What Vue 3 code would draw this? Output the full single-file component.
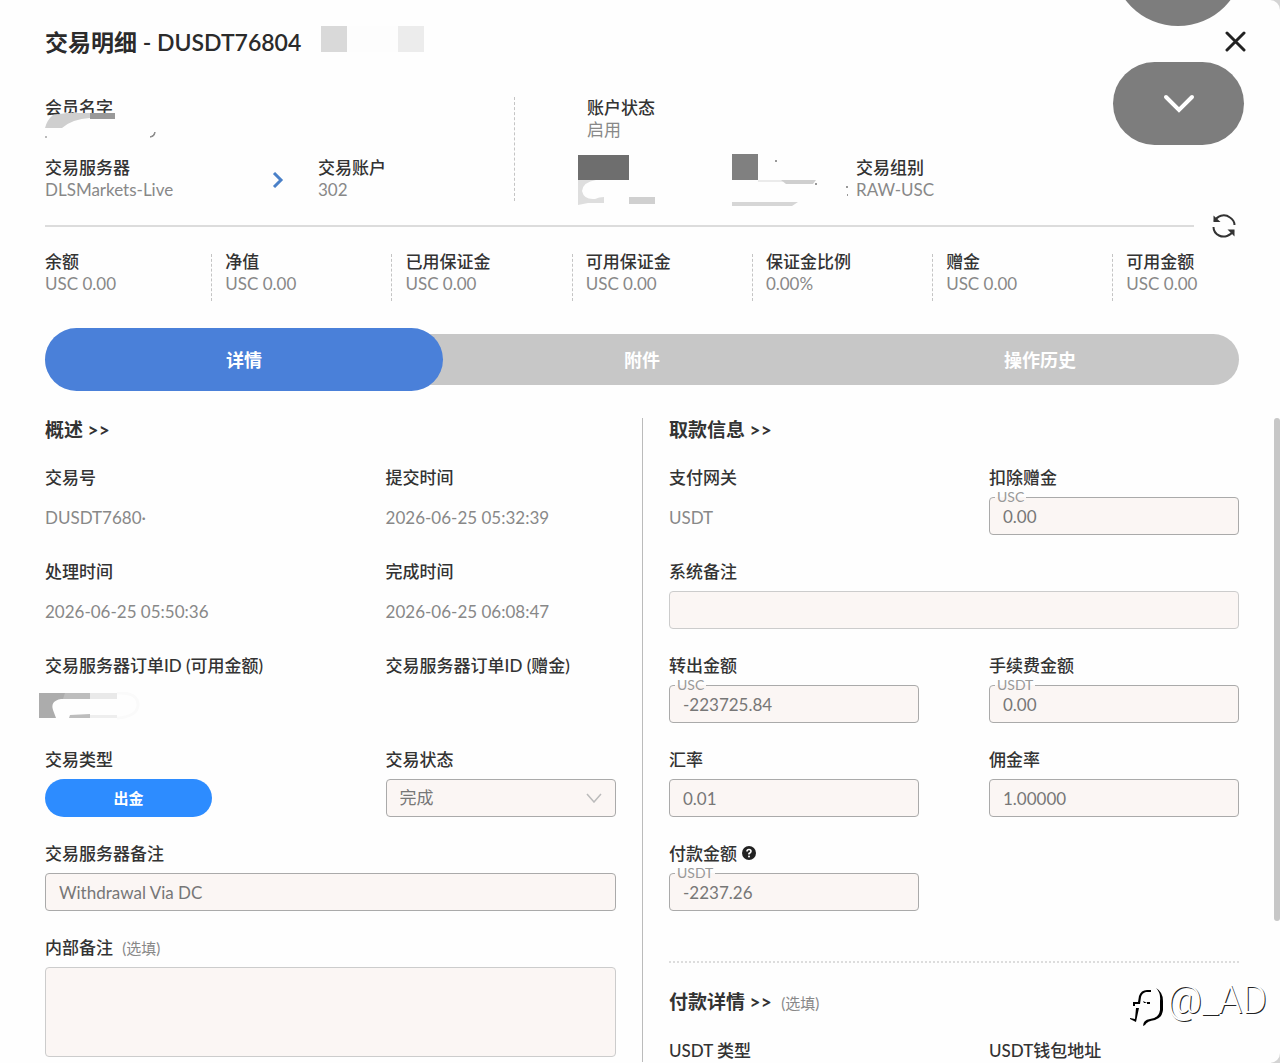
<template>
    <main class="modal">
        <header class="modalHeader">
            <h1>交易明细 - DUSDT76804</h1>
            <svg class="titleMask" width="106" height="26" viewBox="0 0 106 26" aria-hidden="true">
                <rect x="0" y="0" width="26" height="26" fill="#d9d9d9"/>
                <rect x="26" y="0" width="51" height="26" fill="#fdfdfd"/>
                <rect x="77" y="0" width="26" height="26" fill="#ececec"/>
            </svg>
            <button class="iconButton closeButton" type="button" aria-label="关闭">
                <svg width="22" height="22" viewBox="0 0 22 22" fill="none" stroke="#222" stroke-width="3" stroke-linecap="round">
                    <path d="M2 2L19 19M19 2L2 19"/>
                </svg>
            </button>
        </header>

        <section class="account">
            <div class="accountLeft">
                <div class="pair member">
                    <p class="label">会员名字</p>
                    <svg class="nameMask" width="116" height="28" viewBox="0 0 116 28" aria-hidden="true">
                        <path d="M0 15Q2 7 8 2L22 0H45V5Q27 6 17 15Z" fill="#cfcfcf"/>
                        <path d="M45 0H70V6H45Z" fill="#999"/>
                        <path d="M105 24Q109 23 110 19Q110 24 105 24Z" fill="#888" stroke="#888"/>
                        <path d="M0 23H2V25H0Z" fill="#bbb"/>
                    </svg>
                </div>
                <div class="serverRow">
                    <div class="pair server">
                        <p class="label">交易服务器</p>
                        <p class="value">DLSMarkets-Live</p>
                    </div>
                    <svg class="arrow" width="12" height="16" viewBox="0 0 12 16" fill="none" stroke="#4a80c8" stroke-width="3">
                        <path d="M2 1L9 8L2 15"/>
                    </svg>
                    <div class="pair">
                        <p class="label">交易账户</p>
                        <p class="value">302</p>
                    </div>
                </div>
            </div>
            <div class="accountRight">
                <div class="pair member">
                    <p class="label">账户状态</p>
                    <p class="value">启用</p>
                </div>
                <div class="groupRow">
                    <svg class="groupMask" width="278" height="46" viewBox="0 0 278 46" aria-hidden="true">
                        <path d="M0 0H51V25H0Z" fill="#6e6e6e"/>
                        <path d="M0 25H18Q5 27 4 36Q6 45 17 44Q21 42 26 42V48H10L0 50Z" fill="#dedede"/>
                        <path d="M51 42H77V49H51Z" fill="#d0d0d0"/>
                        <path d="M154 -1H180V25H154Z" fill="#808080"/>
                        <path d="M180 25H205V27H180Z" fill="#ebebeb"/>
                        <path d="M203 25H238L235 29H208Z" fill="#cfcfcf"/>
                        <path d="M154 47H220L214 51H154Z" fill="#d6d6d6"/>
                        <path d="M197 5H199V7H197ZM237 28H239V30H237ZM268 31H270V33H268ZM269 39H270V41H269Z" fill="#999"/>
                    </svg>
                    <div class="pair">
                        <p class="label">交易组别</p>
                        <p class="value">RAW-USC</p>
                    </div>
                </div>
            </div>
        </section>

        <div class="refreshRow">
            <div class="line"></div>
            <button class="iconButton" type="button" aria-label="刷新">
                <svg width="24" height="24" viewBox="0 0 24 24" fill="none" stroke="#333" stroke-width="2">
                    <path d="M2.500 7.500C5 2 12 -1 18 3.500C21 5.500 22.500 8.500 22.500 11"/>
                    <path d="M1.500 13C1.500 17 4 20 7 21.500C12 24 18.500 22 21.500 16.500"/>
                    <path d="M1.500 1.500V8H8.500Z" fill="#333" stroke="none"/>
                    <path d="M22.500 22.500V15.500H15.500Z" fill="#333" stroke="none"/>
                </svg>
            </button>
        </div>

        <section class="stats">
            <div v-for="stat in stats" :key="stat.label" class="stat">
                <p class="label">{{ stat.label }}</p>
                <p class="value">{{ stat.value }}</p>
            </div>
        </section>

        <div class="tabs" role="tablist">
            <button
                v-for="tab in tabs"
                :key="tab"
                type="button"
                role="tab"
                :aria-selected="tab === activeTab"
                :class="['tab', { active: tab === activeTab }]"
                @click="activeTab = tab"
            >{{ tab }}</button>
        </div>

        <div class="details">
            <section class="column overview">
                <h2>概述 &gt;&gt;</h2>
                <div class="fields overviewFields">
                    <div v-for="item in overview" :key="item.label" class="field">
                        <p class="label">{{ item.label }}</p>
                        <p class="value fieldValue">{{ item.value }}</p>
                        <svg v-if="item.masked" class="orderMask" width="104" height="28" viewBox="0 0 104 28" aria-hidden="true">
                            <path d="M0 1H51V7H22Q11 9 14 18L17 26H0Z" fill="#acacac"/>
                            <path d="M26 1H51V7H24Z" fill="#bdbdbd"/>
                            <path d="M51 1H78V7H51Z" fill="#e9e9e9"/>
                            <path d="M31 23L51 22V26H30Z" fill="#bdbdbd"/>
                            <path d="M51 23H78V26H51Z" fill="#eee"/>
                            <path d="M78 1Q99 0 99 13Q98 25 78 26" fill="none" stroke="#fafafa" stroke-width="3"/>
                        </svg>
                    </div>
                    <div class="field">
                        <p class="label">交易类型</p>
                        <button class="typeButton" type="button">出金</button>
                    </div>
                    <div class="field">
                        <label class="label" for="status">交易状态</label>
                        <div class="control">
                            <select id="status" v-model="status">
                                <option>完成</option>
                            </select>
                            <svg class="caret" width="16" height="10" viewBox="0 0 16 10" fill="none" stroke="#bbb" stroke-width="1.500">
                                <path d="M1 1L8 9L15 1"/>
                            </svg>
                        </div>
                    </div>
                    <div class="field wide">
                        <label class="label" for="serverNote">交易服务器备注</label>
                        <input id="serverNote" v-model="serverNote" type="text">
                    </div>
                    <div class="field wide">
                        <label class="label" for="internalNote">内部备注 <span class="optional">(选填)</span></label>
                        <textarea id="internalNote" v-model="internalNote" class="pale"></textarea>
                    </div>
                </div>
            </section>

            <section class="column withdrawal">
                <h2>取款信息 &gt;&gt;</h2>
                <div class="fields withdrawalFields">
                    <div class="field">
                        <p class="label">支付网关</p>
                        <p class="value fieldValue">USDT</p>
                    </div>
                    <div v-for="item in amounts" :key="item.id" :class="['field', { wide: item.wide }]">
                        <label class="label" :for="item.id">{{ item.label }}<svg v-if="item.help" class="help" width="14" height="14" viewBox="0 0 14 14" aria-hidden="true">
                            <circle cx="7" cy="7" r="7" fill="#222"/>
                            <path d="M5 5.500Q5 3.500 7 3.500Q9 3.500 9 5.200Q9 6.500 7 7.500V8.500" fill="none" stroke="#fff" stroke-width="1.600"/>
                            <circle cx="7" cy="10.500" r="1" fill="#fff"/>
                        </svg></label>
                        <div class="control">
                            <input :id="item.id" v-model="item.value" type="text" :class="{ pale: item.wide }">
                            <span v-if="item.unit" class="unit">{{ item.unit }}</span>
                        </div>
                    </div>
                </div>
                <div class="payment">
                    <h2>付款详情 &gt;&gt; <span class="optional">(选填)</span></h2>
                    <div class="fields withdrawalFields">
                        <p class="label">USDT 类型</p>
                        <p class="label">USDT钱包地址</p>
                    </div>
                </div>
            </section>
        </div>

        <div class="scrollThumb"></div>
        <div class="floatCircle"></div>
        <button class="floatButton" type="button" aria-label="展开">
            <svg width="32" height="20" viewBox="0 0 32 20" fill="none" stroke="#fff" stroke-width="4" stroke-linecap="round">
                <path d="M3 3L16 16L29 3"/>
            </svg>
        </button>
        <div class="watermark">
            <svg width="36" height="42" viewBox="0 0 36 42" fill="#000">
                <path d="M22 3V5H17Q13 6 12 10L11 17H6V19H4V15H9L10 9Q12 3 18 3Z"/>
                <path d="M7 21H10L7 35L1 32V31L6 32Z"/>
                <path d="M14 14L18 16H15Z"/>
                <path d="M18 15H21V17H18Z"/>
                <path d="M27 1Q34 5 34 14V23Q33 31 26 33Q18 34 16 38L14 39Q14 33 21 32Q30 31 31 23V14Q32 6 27 1Z"/>
            </svg>
            <span>@_AD</span>
        </div>
    </main>
</template>

<script setup>
import { ref } from 'vue';

const stats = [
    { label: "余额", value: "USC 0.00" },
    { label: "净值", value: "USC 0.00" },
    { label: "已用保证金", value: "USC 0.00" },
    { label: "可用保证金", value: "USC 0.00" },
    { label: "保证金比例", value: "0.00%" },
    { label: "赠金", value: "USC 0.00" },
    { label: "可用金额", value: "USC 0.00" }
];

const tabs = ["详情", "附件", "操作历史"];
const activeTab = ref("详情");

const overview = [
    { label: "交易号", value: "DUSDT7680·" },
    { label: "提交时间", value: "2026-06-25 05:32:39" },
    { label: "处理时间", value: "2026-06-25 05:50:36" },
    { label: "完成时间", value: "2026-06-25 06:08:47" },
    { label: "交易服务器订单ID (可用金额)", value: "", masked: true },
    { label: "交易服务器订单ID (赠金)", value: "" }
];

const amounts = ref([
    { id: "bonus", label: "扣除赠金", value: "0.00", unit: "USC" },
    { id: "systemNote", label: "系统备注", value: "", wide: true },
    { id: "transferOut", label: "转出金额", value: "-223725.84", unit: "USC" },
    { id: "fee", label: "手续费金额", value: "0.00", unit: "USDT" },
    { id: "rate", label: "汇率", value: "0.01" },
    { id: "commission", label: "佣金率", value: "1.00000" },
    { id: "payAmount", label: "付款金额", value: "-2237.26", unit: "USDT", help: true }
]);

const status = ref("完成");
const serverNote = ref("Withdrawal Via DC");
const internalNote = ref("");
</script>

<style>
    body{
        margin: 0;
        background: #d4d4d4;
    }
</style>

<style scoped>
    *{
        box-sizing: border-box;
    }
    .modal{
        position: relative;
        min-height: 100vh;
        padding: 0 41px 0 45px;
        overflow: hidden;
        background: #fefefe;
        border-radius: 0 10px 10px 0;
        color: #333;
        font-family: Lato, "Noto Sans CJK SC", sans-serif;
        font-size: 17px;
        line-height: 22px;
    }
    h1, h2, p{
        margin: 0;
    }
    button, input, select, textarea{
        font: inherit;
    }
    .modalHeader{
        display: flex;
        align-items: center;
        padding-top: 26px;
        margin-right: -8px;
    }
    h1{
        font-size: 23px;
        line-height: 32px;
        font-weight: 600;
        color: #2b2b2b;
    }
    .titleMask{
        margin: 0 auto 6px 20px;
    }
    .iconButton{
        display: flex;
        padding: 0;
        border: 0;
        background: none;
        cursor: pointer;
    }
    .label{
        display: block;
        font-weight: 500;
        color: #333;
    }
    .value{
        color: #888;
    }
    .account{
        display: grid;
        grid-template-columns: 470fr 724fr;
        margin-top: 39px;
    }
    .accountLeft{
        border-right: 1px dashed #c4c4c4;
    }
    .accountRight{
        padding-left: 72px;
    }
    .member{
        position: relative;
        height: 44px;
        margin-bottom: 16px;
    }
    .nameMask{
        position: absolute;
        left: 0;
        top: 16px;
    }
    .serverRow, .groupRow{
        display: flex;
    }
    .server{
        width: 227px;
    }
    .arrow{
        margin: 15px 34px 0 0;
    }
    .groupMask{
        margin: -2px 0 0 -9px;
        overflow: visible;
    }
    .refreshRow{
        display: flex;
        align-items: center;
        gap: 18px;
        margin: 13px 3px 0 0;
    }
    .line{
        flex: 1;
        height: 2px;
        background: #dcdcdc;
    }
    .stats{
        display: grid;
        grid-template-columns: repeat(6, 8fr) 5fr;
        margin-top: 13px;
    }
    .stat{
        position: relative;
        height: 50px;
    }
    .stat:not(:last-child)::after{
        content: "";
        position: absolute;
        top: 3px;
        bottom: 0;
        right: 13px;
        border-right: 1px dashed #c4c4c4;
    }
    .tabs{
        display: grid;
        grid-template-columns: repeat(3, 1fr);
        grid-template-rows: 51px;
        align-items: center;
        margin-top: 33px;
        border-radius: 26px;
        background: #c7c7c7;
    }
    .tab{
        height: 51px;
        padding: 0;
        border: 0;
        background: none;
        color: #fff;
        font-size: 18px;
        font-weight: 700;
        cursor: pointer;
    }
    .tab.active{
        height: 63px;
        border-radius: 32px;
        background: #4a80d9;
    }
    .details{
        display: grid;
        grid-template-columns: 299fr 298fr;
        margin-top: 33px;
    }
    .overview{
        padding-right: 26px;
        border-right: 1px solid #bbb;
    }
    .withdrawal{
        padding-left: 26px;
    }
    h2{
        font-size: 19px;
        line-height: 24px;
        font-weight: 700;
        color: #333;
    }
    .fields{
        display: grid;
        row-gap: 26px;
        margin-top: 25px;
    }
    .overviewFields{
        grid-template-columns: 34fr 23fr;
    }
    .withdrawalFields{
        grid-template-columns: 1fr 1fr;
        column-gap: 70px;
    }
    .field{
        position: relative;
        display: flex;
        flex-direction: column;
        gap: 8px;
    }
    .wide{
        grid-column: 1 / -1;
    }
    .fieldValue{
        height: 38px;
        line-height: 42px;
    }
    .orderMask{
        position: absolute;
        left: -6px;
        top: 37px;
    }
    .control{
        position: relative;
    }
    input, select, textarea{
        display: block;
        width: 100%;
        height: 38px;
        padding: 0 13px;
        border: 1px solid #aaa;
        border-radius: 4px;
        background: #fbf6f4;
        color: #777;
        outline: none;
    }
    select{
        appearance: none;
    }
    textarea{
        height: 90px;
        resize: none;
    }
    .pale{
        border-color: #ccc;
    }
    .caret{
        position: absolute;
        right: 14px;
        top: 14px;
        pointer-events: none;
    }
    .unit{
        position: absolute;
        left: 6px;
        top: -8px;
        padding: 0 2px;
        background: linear-gradient(#fefefe 50%, #fbf6f4 50%);
        color: #999;
        font-size: 14px;
        line-height: 16px;
    }
    .typeButton{
        width: 167px;
        height: 38px;
        padding: 0;
        border: 0;
        border-radius: 19px;
        background: #2d8cff;
        color: #fff;
        font-size: 15px;
        font-weight: 700;
        cursor: pointer;
    }
    .optional{
        margin-left: 5px;
        font-size: 15px;
        font-weight: 400;
        color: #888;
    }
    .help{
        margin-left: 5px;
    }
    .payment{
        margin-top: 50px;
        padding-top: 27px;
        border-top: 2px dotted #ddd;
    }
    .scrollThumb{
        position: absolute;
        right: 0;
        top: 418px;
        width: 6px;
        height: 503px;
        border-radius: 3px;
        background: #c7c7c7;
    }
    .floatCircle{
        position: absolute;
        right: 36px;
        top: -106px;
        width: 132px;
        height: 132px;
        border-radius: 50%;
        background: #7d7d7d;
    }
    .floatButton{
        position: absolute;
        right: 36px;
        top: 62px;
        display: flex;
        align-items: center;
        justify-content: center;
        width: 131px;
        height: 83px;
        padding: 0;
        border: 0;
        border-radius: 42px;
        background: #7d7d7d;
        cursor: pointer;
    }
    .watermark{
        position: absolute;
        right: 13px;
        bottom: 34px;
        display: flex;
        align-items: flex-start;
        gap: 2px;
        color: #fff;
        font-family: Roboto, sans-serif;
        font-size: 38px;
        font-weight: 300;
        line-height: 36px;
        text-shadow: 1px 1px 0 #222;
    }
    .watermark svg{
        margin-top: 5px;
    }
</style>
